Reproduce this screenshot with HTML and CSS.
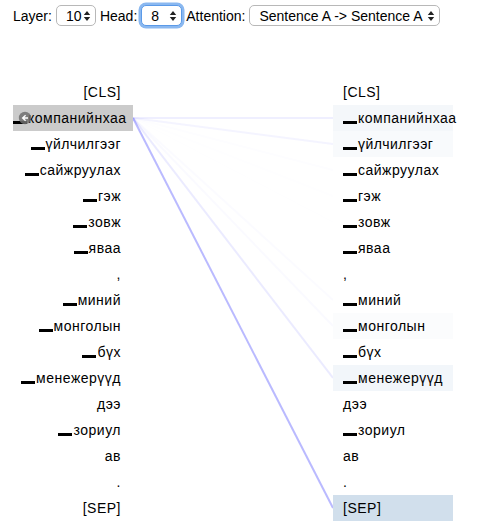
FILE: index.html
```html
<!DOCTYPE html>
<html lang="mn">
<head>
    <meta charset="UTF-8">
    <title>Head View</title>
    <link rel="stylesheet" href="styles.css">
</head>
<body>

    <div class="controls">
        <label>Layer:</label>
        <span class="select-wrap select-layer">
            <select><option>10</option></select>
            <svg class="select-arrows" viewBox="0 0 8 12" width="8" height="12"><path d="M4 1 L7.2 5 L0.8 5 Z M4 11 L7.2 7 L0.8 7 Z"/></svg>
        </span>
        <label>Head:</label>
        <span class="select-wrap select-head is-focused">
            <select><option>8</option></select>
            <svg class="select-arrows" viewBox="0 0 8 12" width="8" height="12"><path d="M4 1 L7.2 5 L0.8 5 Z M4 11 L7.2 7 L0.8 7 Z"/></svg>
        </span>
        <label>Attention:</label>
        <span class="select-wrap select-attn">
            <select><option>Sentence A -&gt; Sentence A</option></select>
            <svg class="select-arrows" viewBox="0 0 8 12" width="8" height="12"><path d="M4 1 L7.2 5 L0.8 5 Z M4 11 L7.2 7 L0.8 7 Z"/></svg>
        </span>
    </div>

    <div class="viz">
        <ul class="token-col token-left" id="left-col"></ul>
        <svg class="attn-lines" id="attn-lines" width="200" height="442"></svg>
        <ul class="token-col token-right" id="right-col"></ul>
        <span class="cursor-dot"><svg viewBox="0 0 14 14" width="14" height="14"><circle cx="7" cy="7" r="6.2" fill="#707070" fill-opacity="0.85"/><path d="M7.6 4.2 L4.6 7 L7.6 9.8 M4.8 7 H10" fill="none" stroke="#fff" stroke-width="1.3"/></svg></span>
    </div>

    <script>
        const tokens = ['[CLS]', '▁компанийнхаа', '▁үйлчилгээг', '▁сайжруулах', '▁гэж', '▁зовж', '▁яваа', ',', '▁миний', '▁монголын', '▁бүх', '▁менежерүүд', 'дээ', '▁зориул', 'ав', '.', '[SEP]'];
        // attention from token 1 (head 8)
        const attn = [0.0, 0.09, 0.06, 0.012, 0.008, 0.004, 0.0, 0.0, 0.02, 0.03, 0.0, 0.11, 0.0, 0.0, 0.0, 0.0, 0.38];
        const active = 1;
        const rowH = 26;

        const left = document.getElementById('left-col');
        const right = document.getElementById('right-col');
        const svg = document.getElementById('attn-lines');

        // '▁' をバーとして描くためspanで包む
        function fill(li, t) {
            if (t.startsWith('▁')) {
                const bar = document.createElement('span');
                bar.className = 'sp';
                bar.textContent = '▁';
                li.appendChild(bar);
                li.appendChild(document.createTextNode(t.slice(1)));
            } else {
                li.textContent = t;
            }
        }

        tokens.forEach((t, i) => {
            const li = document.createElement('li');
            li.className = 'token' + (i === active ? ' is-active' : '');
            fill(li, t);
            left.appendChild(li);

            const ri = document.createElement('li');
            ri.className = 'token';
            fill(ri, t);
            if (attn[i] > 0.025) ri.style.backgroundColor = 'rgba(120, 160, 200, ' + Math.min(attn[i] * 0.9, 0.34).toFixed(3) + ')';
            right.appendChild(ri);

            if (attn[i] <= 0) return;
            const line = document.createElementNS('http://www.w3.org/2000/svg', 'line');
            line.setAttribute('x1', 0);
            line.setAttribute('y1', active * rowH + rowH / 2);
            line.setAttribute('x2', 200);
            line.setAttribute('y2', i * rowH + rowH / 2);
            line.setAttribute('stroke', '#5a5aff');
            line.setAttribute('stroke-width', 2);
            line.setAttribute('stroke-opacity', Math.min(attn[i] * 1.1, 0.42).toFixed(3));
            svg.appendChild(line);
        });
    </script>
</body>
</html>
```

FILE: styles.css
```css
body {
    margin: 0;
    padding: 5px 13px;
    font-family: "Liberation Sans", Arial, "DejaVu Sans", sans-serif;
    font-size: 14px;
    color: #000;
    background-color: #fff;
}

/* --- controls --- */
.controls {
    display: flex;
    align-items: center;
    height: 21px;
    font-size: 14px;
}
.controls label { margin-right: 4px; }
.select-wrap {
    position: relative;
    display: inline-block;
    margin-right: 4px;
}
.select-wrap select {
    appearance: none;
    -webkit-appearance: none;
    display: block;
    height: 21px;
    margin: 0;
    padding: 0 10px 0 9px;
    border: 1px solid #b8b8b8;
    border-radius: 5px;
    background-color: #fff;
    font-family: "Liberation Sans", Arial, sans-serif;
    font-size: 14px;
    color: #000;
}
.select-layer select { width: 40px; }
.select-head select { width: 41px; }
.select-attn select { width: 191px; }
.select-wrap.is-focused select {
    border-color: #5b9ae8;
    box-shadow: 0 0 0 2.5px #8ab8f0;
}
.select-arrows {
    position: absolute;
    right: 5px;
    top: 5px;
    fill: #222;
    pointer-events: none;
}

/* --- attention view --- */
.viz {
    position: relative;
    display: flex;
    margin-top: 53px;
}
.token-col {
    list-style: none;
    margin: 0;
    padding: 0;
    width: 120px;
}
.token {
    height: 26px;
    line-height: 26px;
    white-space: nowrap;
    font-size: 14px;
    letter-spacing: 0.5px;
}
.sp {
    display: inline-block;
    width: 14px;
    height: 3px;
    margin-right: 1px;
    vertical-align: -1px;
    background-color: #000;
    color: transparent;
    overflow: hidden;
    line-height: 3px;
    font-size: 3px;
    letter-spacing: 0;
}
.token-left .token {
    text-align: right;
    padding-right: 12px;
}
.token-left .token.is-active { background-color: #cbcbcb; }
.token-right .token { padding-left: 10px; }
.attn-lines {
    display: block;
    flex: none;
}
.cursor-dot {
    position: absolute;
    left: 5px;
    top: 32px;
    width: 14px;
    height: 14px;
}
.cursor-dot svg { display: block; }
```
